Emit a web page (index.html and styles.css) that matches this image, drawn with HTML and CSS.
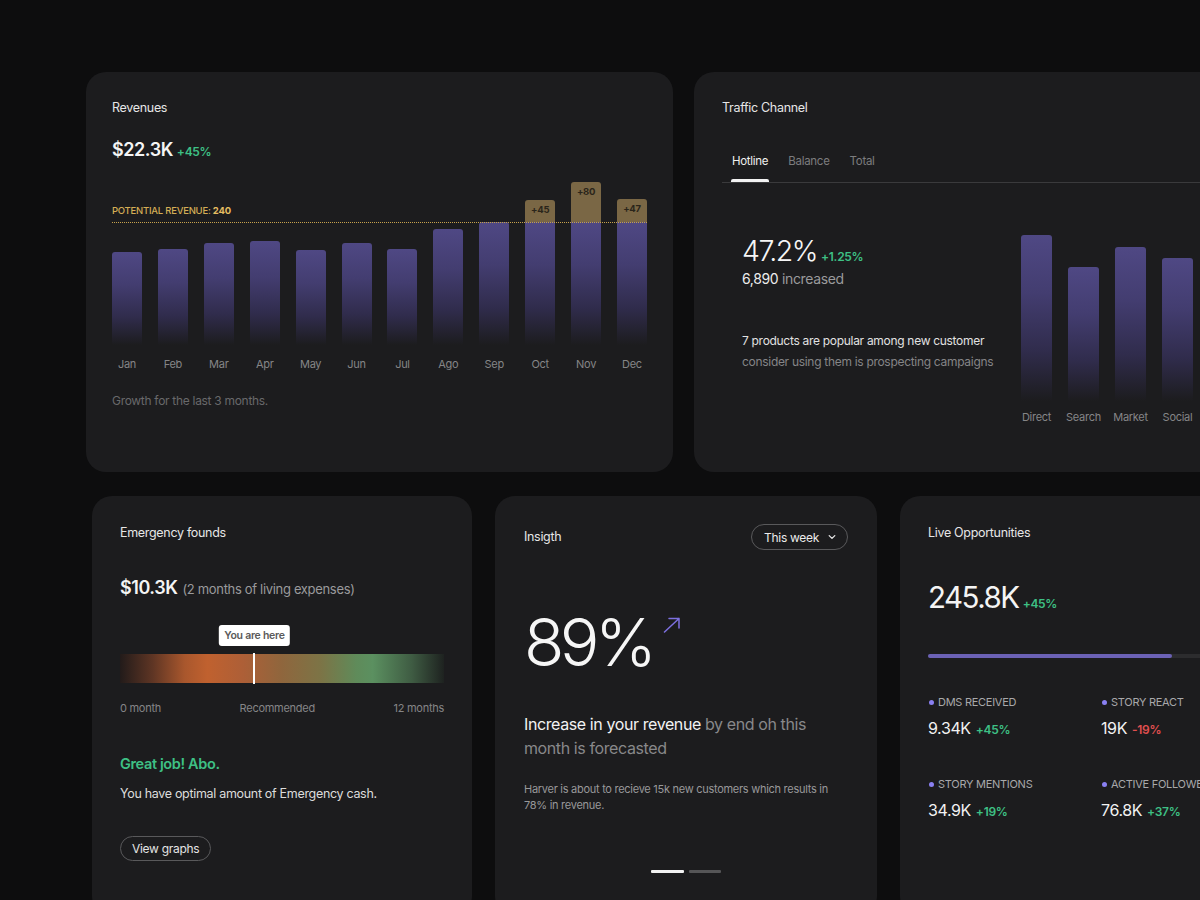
FILE: index.html
```html
<!DOCTYPE html>
<html lang="en">
<head>
<meta charset="utf-8">
<title>Dashboard</title>
<link rel="stylesheet" href="styles.css">
</head>
<body>
<div class="page">
  <div class="row row-top">
    <section class="card card-revenue">
      <h2 class="card-title">Revenues</h2>
      <div class="amount"><span class="amount-value">$22.3K</span><span class="delta up">+45%</span></div>
      <div class="rev-chart">
        <span class="potential-label">POTENTIAL REVENUE: <b>240</b></span>
        <span class="potential-line"></span>
        <div class="rev-bars">
          <div class="rev-col"><div class="rev-plot"><div class="bar" style="height:93px"></div></div><span class="axis-label">Jan</span></div>
          <div class="rev-col"><div class="rev-plot"><div class="bar" style="height:96px"></div></div><span class="axis-label">Feb</span></div>
          <div class="rev-col"><div class="rev-plot"><div class="bar" style="height:102px"></div></div><span class="axis-label">Mar</span></div>
          <div class="rev-col"><div class="rev-plot"><div class="bar" style="height:104px"></div></div><span class="axis-label">Apr</span></div>
          <div class="rev-col"><div class="rev-plot"><div class="bar" style="height:95px"></div></div><span class="axis-label">May</span></div>
          <div class="rev-col"><div class="rev-plot"><div class="bar" style="height:102px"></div></div><span class="axis-label">Jun</span></div>
          <div class="rev-col"><div class="rev-plot"><div class="bar" style="height:96px"></div></div><span class="axis-label">Jul</span></div>
          <div class="rev-col"><div class="rev-plot"><div class="bar" style="height:116px"></div></div><span class="axis-label">Ago</span></div>
          <div class="rev-col"><div class="rev-plot"><div class="bar" style="height:123px"></div></div><span class="axis-label">Sep</span></div>
          <div class="rev-col"><div class="rev-plot"><div class="extra" style="height:22px">+45</div><div class="bar flat" style="height:123px"></div></div><span class="axis-label">Oct</span></div>
          <div class="rev-col"><div class="rev-plot"><div class="extra" style="height:40px">+80</div><div class="bar flat" style="height:123px"></div></div><span class="axis-label">Nov</span></div>
          <div class="rev-col"><div class="rev-plot"><div class="extra" style="height:23px">+47</div><div class="bar flat" style="height:123px"></div></div><span class="axis-label">Dec</span></div>
        </div>
      </div>
      <p class="footnote">Growth for the last 3 months.</p>
    </section>

    <section class="card card-traffic">
      <h2 class="card-title">Traffic Channel</h2>
      <nav class="tabs">
        <span class="tab active">Hotline</span>
        <span class="tab">Balance</span>
        <span class="tab">Total</span>
      </nav>
      <div class="traffic-body">
        <div class="traffic-stats">
          <div class="big"><span class="big-value">47.2%</span><span class="delta up">+1.25%</span></div>
          <div class="sub"><span class="sub-strong">6,890</span> increased</div>
          <p class="traffic-note"><span class="note-strong">7 products are popular among new customer</span><br>consider using them is prospecting campaigns</p>
        </div>
        <div class="channel-bars">
          <div class="ch-col"><div class="ch-plot"><div class="bar" style="height:166px"></div></div><span class="axis-label">Direct</span></div>
          <div class="ch-col"><div class="ch-plot"><div class="bar" style="height:134px"></div></div><span class="axis-label">Search</span></div>
          <div class="ch-col"><div class="ch-plot"><div class="bar" style="height:154px"></div></div><span class="axis-label">Market</span></div>
          <div class="ch-col"><div class="ch-plot"><div class="bar" style="height:143px"></div></div><span class="axis-label">Social</span></div>
        </div>
      </div>
    </section>
  </div>

  <div class="row row-bottom">
    <section class="card card-emergency">
      <h2 class="card-title">Emergency founds</h2>
      <div class="amount"><span class="amount-value">$10.3K</span> <span class="amount-note">(2 months of living expenses)</span></div>
      <div class="meter">
        <div class="meter-tip-row"><span class="meter-tip" style="left:41.5%">You are here</span></div>
        <div class="meter-bar"><span class="meter-marker" style="left:41.5%"></span></div>
        <div class="meter-scale"><span>0 month</span><span>Recommended</span><span>12 months</span></div>
      </div>
      <h3 class="success">Great job! Abo.</h3>
      <p class="success-note">You have optimal amount of Emergency cash.</p>
      <button class="pill-btn">View graphs</button>
    </section>

    <section class="card card-insight">
      <header class="card-head">
        <h2 class="card-title">Insigth</h2>
        <button class="select">This week
          <svg class="chev" width="8" height="6" viewBox="0 0 8 6"><path d="M1.2 1.6 L4 4.4 L6.8 1.6" fill="none" stroke="#e8e8e8" stroke-width="1.3" stroke-linecap="round" stroke-linejoin="round"/></svg>
        </button>
      </header>
      <div class="insight-figure">
        <span class="insight-value">89%</span>
        <svg class="insight-arrow" width="18" height="16" viewBox="0 0 18 16"><path d="M1.5 15 L16 1.5 M6 1.5 H16 V11" fill="none" stroke="#7d70e0" stroke-width="1.5" stroke-linecap="round" stroke-linejoin="round"/></svg>
      </div>
      <p class="insight-lead"><span class="lead-strong">Increase in your revenue</span> by end oh this month is forecasted</p>
      <p class="insight-note">Harver is about to recieve 15k new customers which results in 78% in revenue.</p>
      <div class="pager"><span class="pager-dot active"></span><span class="pager-dot"></span></div>
    </section>

    <section class="card card-live">
      <h2 class="card-title">Live Opportunities</h2>
      <div class="live-figure"><span class="live-value">245.8K</span><span class="delta up">+45%</span></div>
      <div class="progress"><span class="progress-fill" style="width:75.3%"></span></div>
      <div class="live-grid">
        <div class="stat"><span class="stat-label">DMS RECEIVED</span><span class="stat-value">9.34K<span class="delta up">+45%</span></span></div>
        <div class="stat"><span class="stat-label">STORY REACT</span><span class="stat-value">19K<span class="delta down">-19%</span></span></div>
        <div class="stat"><span class="stat-label">STORY MENTIONS</span><span class="stat-value">34.9K<span class="delta up">+19%</span></span></div>
        <div class="stat"><span class="stat-label">ACTIVE FOLLOWERS</span><span class="stat-value">76.8K<span class="delta up">+37%</span></span></div>
      </div>
    </section>
  </div>
</div>
</body>
</html>
```

FILE: styles.css
```css
* { box-sizing: border-box; }

html, body {
  margin: 0;
  padding: 0;
  background: #0d0d0e;
  width: 1200px;
  height: 900px;
  overflow: hidden;
  font-family: Inter, "Noto Sans", "Liberation Sans", sans-serif;
  color: #e8e8e8;
}

.page {
  padding-top: 72px;
}

/* tighter tracking throughout, like a display cut */
.page * {
  letter-spacing: -0.025em;
}

.row {
  display: flex;
  flex-wrap: nowrap;
}

.row-top {
  padding-left: 86px;
  gap: 21px;
}

.row-bottom {
  padding-left: 92px;
  gap: 23px;
  margin-top: 24px;
}

.card {
  background: #1c1c1e;
  border-radius: 20px;
  flex-shrink: 0;
}

.card-title {
  margin: 0;
  font-size: 12.5px;
  line-height: 16px;
  font-weight: 400;
  color: #e6e6e6;
}

.delta {
  font-size: 12px;
  line-height: 1;
  font-weight: 600;
  margin-left: 4px;
}
.delta.up { color: #3ec085; }
.delta.down { color: #e04f4f; }

.axis-label {
  font-size: 11px;
  line-height: 14px;
  color: #858587;
  white-space: nowrap;
}

.bar {
  width: 100%;
  border-radius: 3px 3px 0 0;
  background: linear-gradient(180deg, #4f4884 0%, #433d70 35%, #302c4c 70%, #1c1c1e 100%);
}
.bar.flat { border-radius: 0; }

/* Revenues */
.card-revenue {
  width: 587px;
  height: 400px;
  padding: 28px 26px 0;
}

.amount {
  margin-top: 23px;
  line-height: 22px;
  display: flex;
  align-items: baseline;
}
.amount-value {
  font-size: 18px;
  font-weight: 600;
  color: #f4f4f4;
}

.rev-chart {
  position: relative;
  margin-top: 14px;
}

.potential-label {
  position: absolute;
  top: 30px;
  left: 0;
  font-size: 9.5px;
  line-height: 12px;
  font-weight: 500;
  color: #d4ad55;
}
.potential-label b { font-weight: 700; color: #e5bd62; }

.potential-line {
  position: absolute;
  top: 47px;
  left: 0;
  right: 0;
  border-top: 1px dotted #c7a24c;
  z-index: 2;
}

.rev-bars {
  display: flex;
  justify-content: space-between;
}

.rev-col {
  width: 30px;
  display: flex;
  flex-direction: column;
  align-items: center;
}

.rev-plot {
  width: 100%;
  height: 170px;
  display: flex;
  flex-direction: column;
  justify-content: flex-end;
}

.rev-col .axis-label { margin-top: 12px; }

.extra {
  width: 100%;
  background: #7a6745;
  border-radius: 3px 3px 0 0;
  color: #2a251a;
  font-size: 9.5px;
  font-weight: 700;
  text-align: center;
  padding-top: 4px;
  line-height: 12px;
}

.footnote {
  margin: 22px 0 0;
  font-size: 12px;
  line-height: 16px;
  color: #69696b;
}

/* Traffic */
.card-traffic {
  width: 620px;
  height: 400px;
  padding: 28px 0 0 28px;
}

.tabs {
  margin-top: 37px;
  display: flex;
  border-bottom: 1px solid #3a3a3c;
}

.tab {
  position: relative;
  padding: 0 10px 13px;
  font-size: 11.5px;
  line-height: 16px;
  color: #7c7c7e;
}
.tab.active { color: #f0f0f0; }
.tab.active::after {
  content: "";
  position: absolute;
  left: 9px;
  right: 9px;
  bottom: 0;
  height: 3px;
  border-radius: 2px 2px 0 0;
  background: #f2f2f2;
}

.traffic-body {
  display: flex;
  margin-top: 51px;
  padding-left: 20px;
}

.traffic-stats {
  width: 279px;
  flex-shrink: 0;
}

.big {
  display: flex;
  align-items: baseline;
  line-height: 34px;
}
.big-value {
  font-size: 28.5px;
  font-weight: 300;
  color: #f6f6f6;
  letter-spacing: -1.5px;
}

.sub {
  margin-top: 1px;
  font-size: 14px;
  line-height: 20px;
  color: #9a9a9c;
}
.sub-strong { color: #ececec; }

.traffic-note {
  margin: 41px 0 0;
  font-size: 12px;
  line-height: 21px;
  color: #858587;
}
.note-strong { color: #e2e2e2; }

.channel-bars {
  display: flex;
  gap: 16px;
}

.ch-col {
  width: 31px;
  display: flex;
  flex-direction: column;
  align-items: center;
}

.ch-plot {
  width: 100%;
  height: 167px;
  display: flex;
  flex-direction: column;
  justify-content: flex-end;
}
.ch-col .axis-label { margin-top: 9px; }

/* Emergency */
.card-emergency {
  width: 380px;
  height: 420px;
  padding: 29px 28px 0;
}
.card-emergency .amount { margin-top: 36px; }
.amount-note {
  font-size: 13px;
  line-height: 1;
  font-weight: 400;
  color: #9a9a9c;
  margin-left: 5px;
}

.meter { margin-top: 26px; }

.meter-tip-row {
  position: relative;
  height: 21px;
}
.meter-tip {
  position: absolute;
  top: 0;
  transform: translateX(-50%);
  background: #ffffff;
  color: #5a5a5a;
  font-size: 10.5px;
  font-weight: 600;
  line-height: 21px;
  padding: 0 5px;
  border-radius: 3px;
  white-space: nowrap;
}

.meter-bar {
  position: relative;
  margin-top: 8px;
  height: 29px;
  background: linear-gradient(90deg, #221b1a 0%, #5e3524 10%, #a9572d 20%, #c0612f 27%, #ad5f37 38%, #8f663d 50%, #7c7446 62%, #5f8b5a 73%, #5b9060 78%, #3f5c43 90%, #1e2220 100%);
}
.meter-marker {
  position: absolute;
  top: -1px;
  bottom: -1px;
  width: 2px;
  margin-left: -1px;
  background: #ffffff;
}

.meter-scale {
  display: flex;
  justify-content: space-between;
  margin-top: 18px;
  font-size: 11px;
  line-height: 14px;
  color: #858587;
}

.success {
  margin: 39px 0 0;
  font-size: 14.5px;
  line-height: 20px;
  font-weight: 600;
  color: #3ec085;
}
.success-note {
  margin: 11px 0 0;
  font-size: 12.5px;
  line-height: 18px;
  color: #dcdcdc;
}

.pill-btn {
  margin-top: 33px;
  height: 25px;
  padding: 0 11px;
  border: 1px solid #59595b;
  border-radius: 13px;
  background: transparent;
  color: #e4e4e4;
  font-family: inherit;
  font-size: 12px;
  line-height: 23px;
}

/* Insight */
.card-insight {
  width: 382px;
  height: 420px;
  padding: 28px 29px 0;
}

.card-head {
  display: flex;
  justify-content: space-between;
  align-items: center;
  height: 26px;
}

.select {
  display: flex;
  align-items: center;
  gap: 9px;
  height: 26px;
  padding: 0 11px 0 12px;
  border: 1px solid #59595b;
  border-radius: 13px;
  background: transparent;
  color: #ececec;
  font-family: inherit;
  font-size: 12px;
}

.insight-figure {
  display: flex;
  align-items: flex-start;
  margin-top: 58px;
}
.insight-value {
  font-size: 66px;
  line-height: 68px;
  font-weight: 300;
  color: #f6f6f6;
  letter-spacing: -4.5px;
}
.insight-arrow {
  margin-left: 11px;
  margin-top: 9px;
}

.insight-lead {
  margin: 36px 0 0;
  font-size: 16px;
  line-height: 24px;
  color: #88888a;
}
.lead-strong { color: #f2f2f2; }

.insight-note {
  margin: 21px 0 0;
  font-size: 11px;
  line-height: 16px;
  color: #98989a;
}

.pager {
  display: flex;
  justify-content: center;
  gap: 5px;
  margin-top: 57px;
}
.pager-dot {
  width: 32px;
  height: 3px;
  border-radius: 1px;
  background: #555557;
}
.pager-dot.active {
  width: 33px;
  background: #f2f2f2;
}

/* Live */
.card-live {
  width: 380px;
  height: 420px;
  padding: 29px 28px 0;
}

.live-figure {
  margin-top: 38px;
  display: flex;
  align-items: baseline;
  line-height: 36px;
}
.live-value {
  font-size: 29.5px;
  font-weight: 400;
  color: #f4f4f4;
  letter-spacing: -1.5px;
}

.progress {
  margin-top: 39px;
  height: 4px;
  border-radius: 2px;
  background: #2c2c2e;
}
.progress-fill {
  display: block;
  height: 100%;
  border-radius: 2px;
  background: #6b61b5;
}

.live-grid {
  display: grid;
  grid-template-columns: 173px 173px;
  row-gap: 39px;
  margin-top: 37px;
}

.stat {
  display: flex;
  flex-direction: column;
}

.stat-label {
  display: flex;
  align-items: center;
  font-size: 11px;
  line-height: 14px;
  color: #a8a8aa;
  white-space: nowrap;
}
.stat-label::before {
  content: "";
  width: 5px;
  height: 5px;
  border-radius: 50%;
  background: #8a80f2;
  margin: 0 4px 0 1px;
}

.stat-value {
  margin-top: 9px;
  font-size: 16px;
  line-height: 20px;
  color: #f2f2f2;
  display: flex;
  align-items: baseline;
}
.stat-value .delta { margin-left: 5px; }
```
